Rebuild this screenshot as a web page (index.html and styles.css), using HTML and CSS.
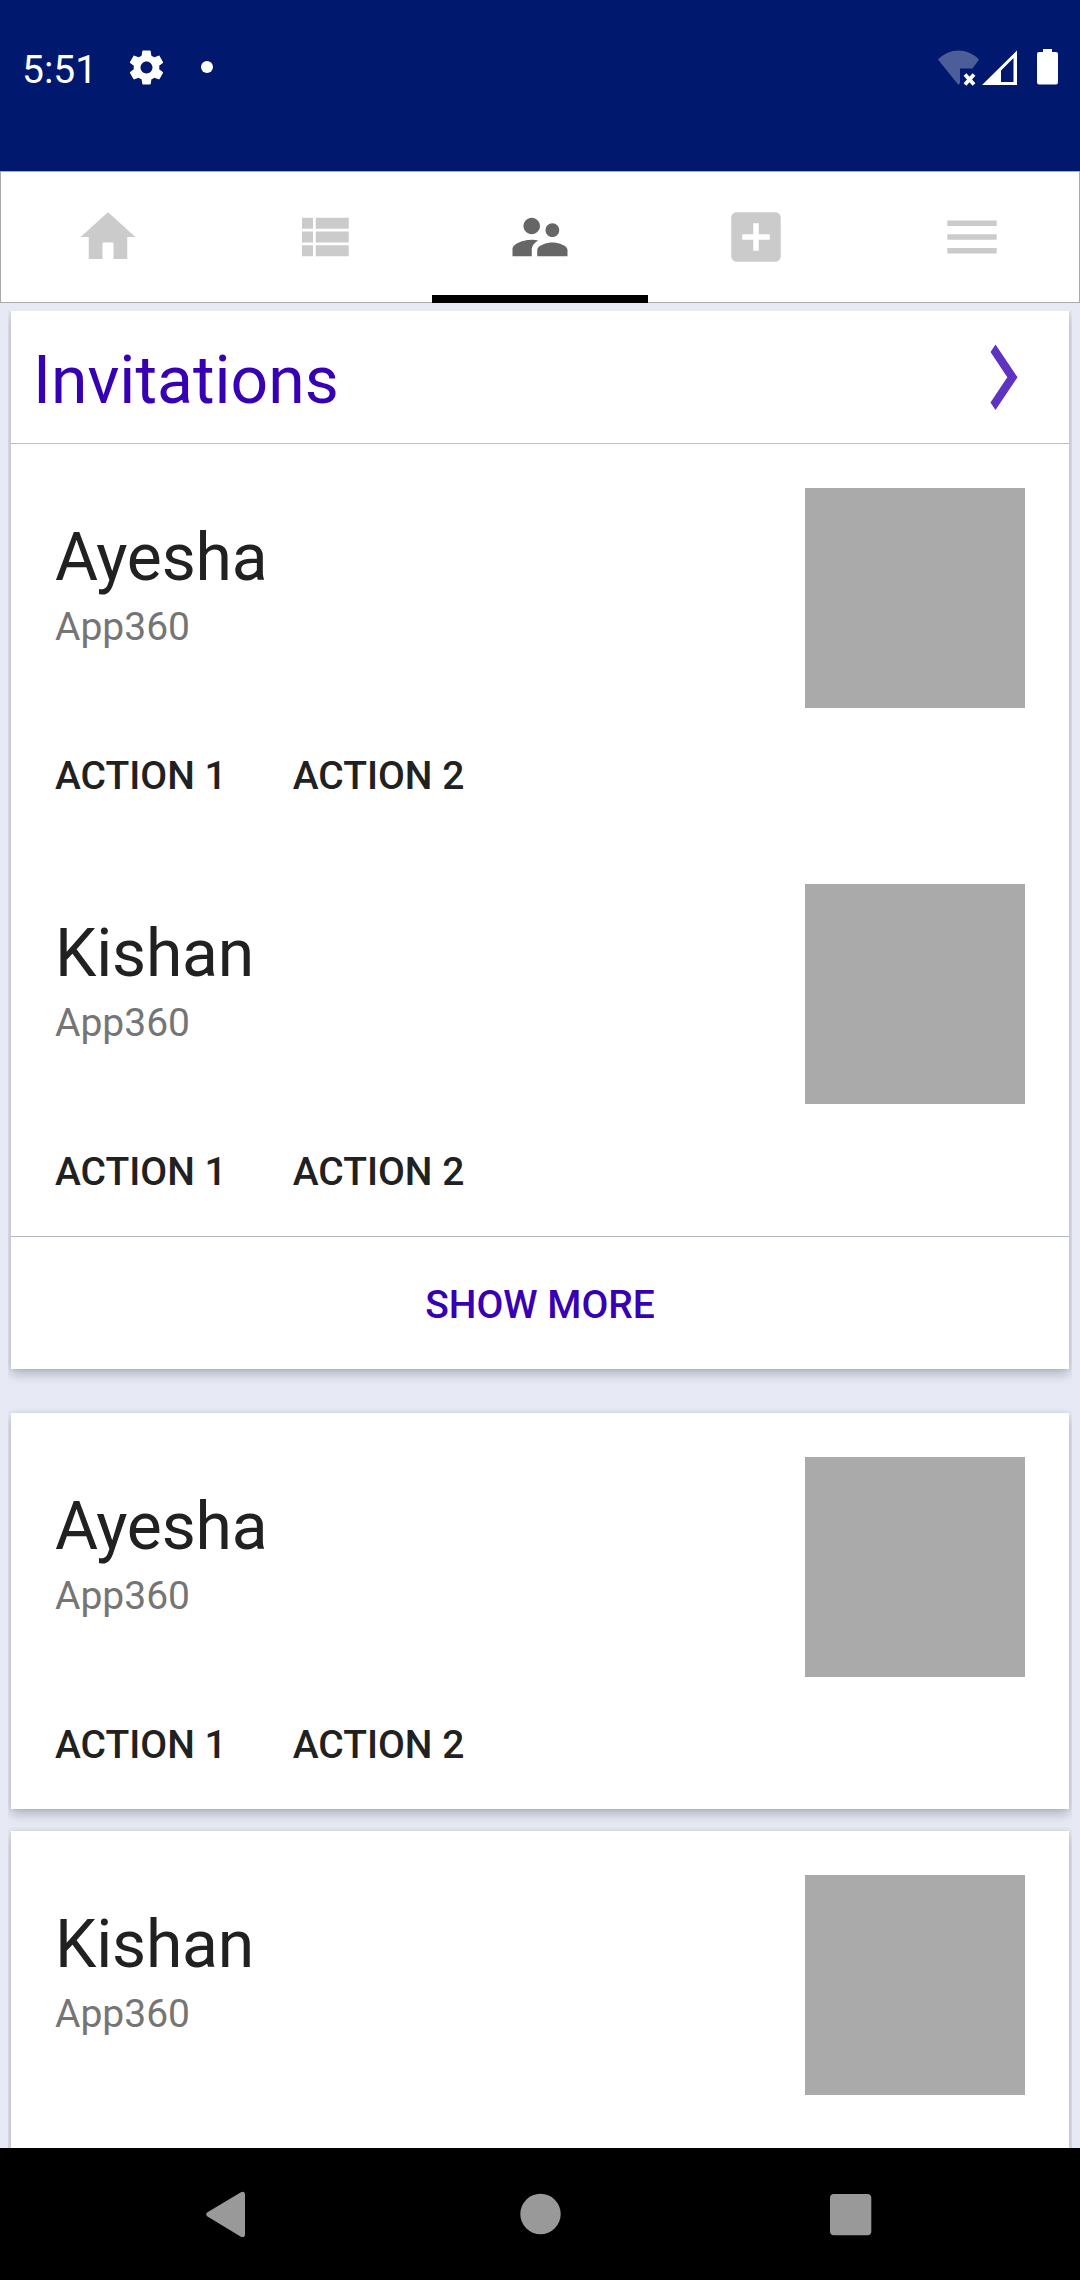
FILE: index.html
```html
<!DOCTYPE html>
<html lang="en">
<head>
<meta charset="utf-8">
<title>Invitations</title>
<link rel="stylesheet" href="styles.css">
</head>
<body>
<div class="screen">
  <header class="status-bar">
    <div class="status-left">
      <span class="clock">5:51</span>
      <svg class="gear" viewBox="0 0 24 24"><path d="M19.43 12.98c.04-.32.07-.64.07-.98s-.03-.66-.07-.98l2.11-1.65c.19-.15.24-.42.12-.64l-2-3.46c-.12-.22-.39-.3-.61-.22l-2.49 1c-.52-.4-1.08-.73-1.69-.98l-.38-2.65C14.46 2.18 14.25 2 14 2h-4c-.25 0-.46.18-.49.42l-.38 2.65c-.61.25-1.17.59-1.69.98l-2.49-1c-.23-.09-.49 0-.61.22l-2 3.46c-.13.22-.07.49.12.64l2.11 1.65c-.04.32-.07.65-.07.98s.03.66.07.98l-2.11 1.65c-.19.15-.24.42-.12.64l2 3.46c.12.22.39.3.61.22l2.49-1c.52.4 1.08.73 1.69.98l.38 2.65c.03.24.24.42.49.42h4c.25 0 .46-.18.49-.42l.38-2.65c.61-.25 1.17-.59 1.69-.98l2.49 1c.23.09.49 0 .61-.22l2-3.46c.12-.22.07-.49-.12-.64l-2.11-1.65zM12 15.5c-1.93 0-3.5-1.57-3.5-3.5s1.57-3.5 3.5-3.5 3.5 1.57 3.5 3.5-1.57 3.5-3.5 3.5z"/></svg>
      <span class="dot"></span>
    </div>
    <svg class="signals" viewBox="0 0 122 38">
      <path fill-opacity=".3" d="M0 10.500Q9 1.500 20.500 1.500T41 10.500L34.500 19.500H22V34L20.500 36z"/>
      <path class="cross" d="M27 25.500l9 10M36 25.500l-9 10"/>
      <path fill-rule="evenodd" d="M44 36L79 1.500V36zM63 21.500V33H75.500V9z"/>
      <path d="M105 0h9v3h4q2 0 2 2v28q0 2.500-2 2.500h-17q-2 0-2-2.500V5q0-2 2-2h4z"/>
    </svg>
  </header>

  <nav class="tabs">
    <a class="tab"><svg viewBox="0 0 24 24"><path d="M10 20v-6h4v6h5v-8h3L12 3 2 12h3v8z"/></svg></a>
    <a class="tab"><svg viewBox="0 0 24 24"><path d="M4 14h4v-4H4v4zm0 5h4v-4H4v4zM4 9h4V5H4v4zm5 5h12v-4H9v4zm0 5h12v-4H9v4zM9 5v4h12V5H9z"/></svg></a>
    <a class="tab tab-active"><svg viewBox="0 0 24 24"><path d="M16.500 12c1.380 0 2.490-1.120 2.490-2.500S17.880 7 16.500 7 14 8.120 14 9.500s1.120 2.500 2.500 2.500zM9 11c1.660 0 2.990-1.340 2.990-3S10.660 5 9 5 6 6.340 6 8s1.340 3 3 3zm7.500 3c-1.830 0-5.500.92-5.500 2.750V19h11v-2.250c0-1.830-3.670-2.750-5.500-2.750zM9 13c-2.330 0-7 1.170-7 3.500V19h7v-2.250c0-.85.33-2.340 2.370-3.470C10.500 13.100 9.660 13 9 13z"/></svg></a>
    <a class="tab"><svg viewBox="0 0 24 24"><path d="M19 3H5c-1.110 0-2 .9-2 2v14c0 1.100.89 2 2 2h14c1.100 0 2-.9 2-2V5c0-1.100-.9-2-2-2zm-2 10h-4v4h-2v-4H7v-2h4V7h2v4h4v2z"/></svg></a>
    <a class="tab"><svg viewBox="0 0 24 24"><path d="M3 18h18v-2H3v2zm0-5h18v-2H3v2zm0-7v2h18V6H3z"/></svg></a>
  </nav>

  <main class="content">
    <section class="card card-group">
      <div class="card-head">
        <h1 class="heading">Invitations</h1>
        <svg class="chevron" viewBox="0 0 28 67"><path d="M5.500 0.500L27.500 33.300 5.500 66 .5 58.500 17.300 33.300.5 8z"/></svg>
      </div>
      <article class="person">
        <div class="person-main"><div><h2 class="name">Ayesha</h2><p class="source">App360</p></div><div class="thumb"></div></div>
        <div class="actions"><span>ACTION 1</span><span>ACTION 2</span></div>
      </article>
      <article class="person">
        <div class="person-main"><div><h2 class="name">Kishan</h2><p class="source">App360</p></div><div class="thumb"></div></div>
        <div class="actions"><span>ACTION 1</span><span>ACTION 2</span></div>
      </article>
      <div class="show-more">SHOW MORE</div>
    </section>
    <section class="card">
      <article class="person">
        <div class="person-main"><div><h2 class="name">Ayesha</h2><p class="source">App360</p></div><div class="thumb"></div></div>
        <div class="actions"><span>ACTION 1</span><span>ACTION 2</span></div>
      </article>
    </section>
    <section class="card">
      <article class="person">
        <div class="person-main"><div><h2 class="name">Kishan</h2><p class="source">App360</p></div><div class="thumb"></div></div>
      </article>
    </section>
  </main>

  <footer class="nav-bar">
    <svg viewBox="0 0 66 66"><path d="M14.500 31.200Q11.800 33.500 14.500 35.600L47.500 55.500Q52 57.500 52 53V13.500Q52 9.500 47.500 11.500z"/></svg>
    <svg viewBox="0 0 66 66"><circle cx="33.500" cy="33" r="20.200"/></svg>
    <svg viewBox="0 0 66 66"><rect x="10" y="13" width="41.300" height="41.300" rx="4"/></svg>
  </footer>
</div>
</body>
</html>
```
FILE: styles.css
```css
* { box-sizing: border-box; }

body {
  margin: 0;
  font-family: Roboto, "Liberation Sans", sans-serif;
}

h1, h2, p { margin: 0; font-weight: 400; }
svg { display: block; flex: none; }

.screen {
  display: flex;
  flex-direction: column;
  width: 1080px;
  height: 2280px;
  overflow: hidden;
  background: #e7e9f5;
}

/* Status bar */
.status-bar {
  display: flex;
  justify-content: space-between;
  align-items: flex-start;
  flex: none;
  height: 171px;
  padding: 47px 20px 0 22px;
  background: #00186e;
  color: #fff;
}
.status-left { display: flex; align-items: flex-start; }
.clock {
  width: 104px;
  font-size: 39px;
  line-height: 46px;
}
.gear { width: 41px; height: 41px; fill: #fff; }
.dot {
  width: 12px;
  height: 12px;
  margin: 14px 0 0 34px;
  border-radius: 50%;
  background: #fff;
}
.signals { width: 122px; height: 38px; margin-top: 2px; fill: #fff; }
.signals .cross { stroke: #fff; stroke-width: 3.800; fill: none; }

/* Tabs */
.tabs {
  display: grid;
  grid-template-columns: repeat(5, 1fr);
  flex: none;
  height: 132px;
  background: #fff;
  box-shadow: inset 0 0 0 1px #aaa;
}
.tab { display: grid; place-items: center; }
.tab svg { width: 66px; height: 66px; fill: #cbcbcb; }
.tab-active { box-shadow: inset 0 -8px #000; }
.tab-active svg { fill: #666; }

/* Cards */
.content {
  display: flex;
  flex-direction: column;
  gap: 22px;
  flex: 1;
  min-height: 0;
  margin: 8px 8px 0;
  padding: 0 3px;
  overflow: hidden;
}
.card {
  flex: none;
  background: #fff;
  box-shadow: 0 5px 11px rgba(0, 0, 0, .24), 0 0 4px rgba(0, 0, 0, .08);
}
.card-group { margin-bottom: 22px; }
.card-head {
  display: flex;
  justify-content: space-between;
  align-items: flex-start;
  height: 133px;
  padding: 31px 51px 0 22px;
  border-bottom: 1px solid #bcbdc9;
}
.heading { color: #3700b3; font-size: 66px; line-height: 78px; }
.chevron { width: 28px; height: 67px; margin-top: 2px; fill: #5f33c2; }

.person { height: 396px; padding-top: 44px; }
.person-main {
  display: flex;
  justify-content: space-between;
  height: 220px;
  padding: 0 44px;
}
.name {
  padding-top: 31px;
  color: #212121;
  font-size: 66px;
  letter-spacing: -.2px;
  line-height: 78px;
}
.source {
  padding-top: 7px;
  color: #757575;
  font-size: 39px;
  line-height: 46px;
}
.thumb { width: 220px; height: 220px; background: #aaa; }
.actions {
  display: flex;
  gap: 66px;
  padding: 45px 44px 0;
  color: #212121;
  font-size: 39px;
  font-weight: 500;
  line-height: 46px;
}
.show-more {
  height: 133px;
  padding-top: 45px;
  border-top: 1px solid #b4b7c4;
  color: #3700b3;
  font-size: 39px;
  font-weight: 500;
  line-height: 46px;
  text-align: center;
}

/* System navigation */
.nav-bar {
  display: flex;
  justify-content: space-between;
  flex: none;
  height: 132px;
  padding: 33px 194px 0 193px;
  background: #000;
}
.nav-bar svg { width: 66px; height: 66px; fill: #999; }
```
